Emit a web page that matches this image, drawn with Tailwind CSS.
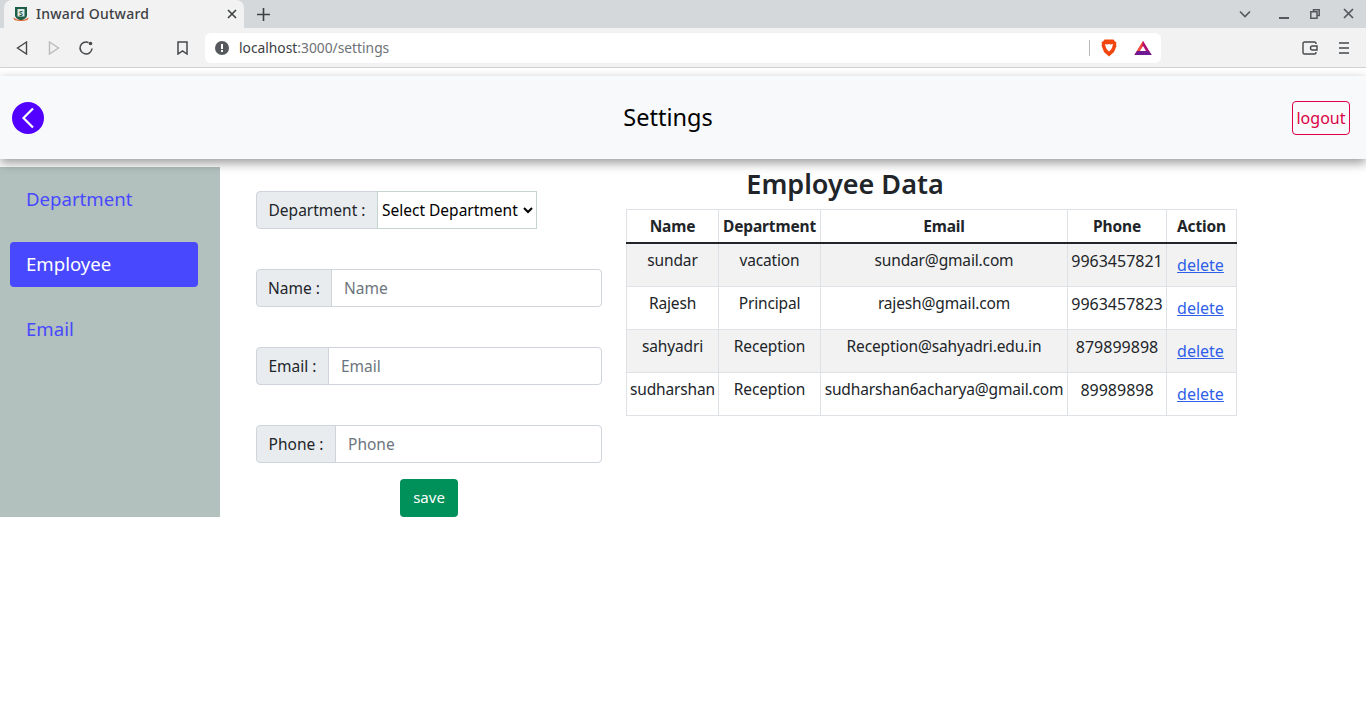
<!DOCTYPE html>
<html lang="en">

<head>
    <meta charset="UTF-8">
    <meta name="viewport" content="width=device-width, initial-scale=1.0">
    <title>Inward Outward</title>
    <script src="https://cdn.jsdelivr.net/npm/@tailwindcss/browser@4"></script>
</head>

<body class="bg-white text-[#212529] font-['Noto_Sans',sans-serif] overflow-hidden h-[722px]">
    <!-- browser tabs -->
    <div class="h-[28px] bg-[#d5d8db] flex items-end relative">
        <div class="ml-[4px] w-[240px] h-[28px] bg-[#f2f2f2] rounded-t-lg flex items-center pl-[9px] pr-[6px]">
            <svg width="16" height="16" viewBox="0 0 16 16">
                <path d="M2 1h12v8c0 3-3 4.500-6 5.500C5 13.500 2 12 2 9z" fill="#1d5c46" />
                <rect x="4.500" y="3" width="7" height="7.500" fill="#dfe9e4" />
                <path d="M0 11.500q8 5 16 0l-1.500 2.500q-6.500 2-13 0z" fill="#e0602c" />
                <text x="8" y="9.500" text-anchor="middle" font-size="7" font-weight="700" fill="#1d5c46">S</text>
            </svg>
            <span class="ml-[7px] mb-[2px] text-[14px] font-medium text-[#3c4043] tracking-[0.25px]">Inward Outward</span>
            <svg class="ml-auto mb-[1px]" width="12" height="12" viewBox="0 0 12 12" stroke="#3c4043" stroke-width="1.600">
                <path d="M2 2l8 8M10 2l-8 8" />
            </svg>
        </div>
        <svg class="ml-[13px] mb-[7px]" width="13" height="13" viewBox="0 0 13 13" stroke="#3c4043" stroke-width="1.600">
            <path d="M6.500 0v13M0 6.500h13" />
        </svg>
        <div class="ml-auto flex items-center h-[28px] pr-[12px] pb-[1px]">
            <svg width="12" height="8" viewBox="0 0 12 8" fill="none" stroke="#55585c" stroke-width="1.600">
                <path d="M1 1.500l5 5 5-5" />
            </svg>
            <svg class="ml-[28px] mt-[8px]" width="10" height="2" viewBox="0 0 10 2">
                <rect width="10" height="2" fill="#55585c" />
            </svg>
            <svg class="ml-[21px]" width="10" height="10" viewBox="0 0 10 10" fill="none" stroke="#55585c" stroke-width="1.500">
                <path d="M3.500 2.500V.8h5.700v5.700H7.500M.8 2.800h6.200v6.400H.8z" />
            </svg>
            <svg class="ml-[23px]" width="11" height="11" viewBox="0 0 11 11" stroke="#55585c" stroke-width="1.700">
                <path d="M1 1l9 9M10 1l-9 9" />
            </svg>
        </div>
    </div>

    <!-- browser toolbar -->
    <div class="h-[40px] bg-[#f2f2f2] border-b border-[#d0d1d2] flex items-center">
        <svg class="ml-[16px]" width="12" height="14" viewBox="0 0 12 14" fill="none" stroke="#46494c" stroke-width="1.400">
            <path d="M10.500 1L1.500 7l9 6z" />
        </svg>
        <svg class="ml-[20px]" width="12" height="14" viewBox="0 0 12 14" fill="none" stroke="#b9bbbd" stroke-width="1.400">
            <path d="M1.500 1l9 6-9 6z" />
        </svg>
        <svg class="ml-[18px]" width="16" height="16" viewBox="0 0 16 16" fill="none" stroke="#46494c" stroke-width="1.500">
            <path d="M14 8.500A6 6 0 1 1 10.500 2.500" />
            <circle cx="12.500" cy="3.500" r="1.800" fill="#46494c" stroke="none" />
        </svg>
        <svg class="ml-[83px]" width="11" height="14" viewBox="0 0 11 14" fill="none" stroke="#46494c" stroke-width="1.500">
            <path d="M1 1h9v12L5.500 10 1 13z" />
        </svg>
        <div class="ml-[17px] w-[956px] h-[30px] bg-white rounded-md flex items-center pl-[10px]">
            <svg width="14" height="14" viewBox="0 0 14 14">
                <circle cx="7" cy="7" r="7" fill="#55585c" />
                <rect x="6" y="3" width="2" height="5" fill="#fff" />
                <rect x="6" y="9" width="2" height="2" fill="#fff" />
            </svg>
            <span class="ml-[10px] pt-[2px] text-[13.8px]"><span class="text-[#3c4043]">localhost</span><span class="text-[#6e7276]">:3000/settings</span></span>
            <div class="ml-auto w-px h-[16px] bg-[#b4b6b8]"></div>
            <svg class="ml-[11px]" width="16" height="18" viewBox="0 0 16 18">
                <path d="M3.500.5h9l1.500 2 1.500 1-.5 2 .5 1.500L13 13l-5 4.500L3 13 .5 6.500 1 5 .5 3 2 2.500z" fill="#f1460f" />
                <path d="M4 5l2.500.5L8 5l1.500.5L12 5l-1 4-1.500 2L8 12.500 6.500 11 5 9z" fill="#fff" />
            </svg>
            <svg class="ml-[17px]" width="18" height="16" viewBox="0 0 18 16">
                <path d="M9 1l8.500 14H.5z" fill="#e0144c" />
                <path d="M9 1L.5 15H6z" fill="#f2503a" />
                <path d="M9 1l8.500 14H14L9 6z" fill="#a8127a" />
                <path d="M.5 15L3 11h12l2.500 4z" fill="#6f1a94" />
                <path d="M9 6l3 5H6z" fill="#fff" />
            </svg>
            <div class="w-[9px]"></div>
        </div>
        <svg class="ml-[141px]" width="16" height="14" viewBox="0 0 16 14" fill="none" stroke="#46494c" stroke-width="1.400">
            <path d="M14 3V2.500C14 1.500 13.500 1 12.500 1h-10C1.500 1 1 1.500 1 2.500v9c0 1 .5 1.500 1.500 1.500h10c1 0 1.500-.5 1.500-1.500V11" />
            <path d="M15 5H10.500a2 2 0 0 0 0 4H15z" />
        </svg>
        <svg class="ml-[21px]" width="10" height="12" viewBox="0 0 10 12" stroke="#46494c" stroke-width="1.500">
            <path d="M0 1h10M0 6h10M0 11h10" />
        </svg>
    </div>

    <!-- page header -->
    <nav class="relative z-10 mt-[8px] h-[83px] bg-[#f8f9fa] shadow-[0_4px_10px_rgba(0,0,0,0.4)] flex items-center justify-between pl-[12px] pr-[16px]">
        <div class="w-[32px] h-[32px] rounded-full bg-[#5200ff] flex items-center justify-center">
            <svg width="14" height="22" viewBox="0 0 14 22" fill="none" stroke="#fff" stroke-width="2.200">
                <path d="M12 1.500L2.500 11l9.500 9.500" />
            </svg>
        </div>
        <p class="text-[23.5px] text-black">Settings</p>
        <button class="w-[58px] h-[34px] rounded border border-[#dc0045] text-[#dc0045] text-[16px] bg-transparent">logout</button>
    </nav>

    <main class="flex items-start pt-[8px]">
        <!-- left menu -->
        <aside class="w-[220px] h-[350px] bg-[#b2c0be] pt-[10px] pl-[10px] pr-[22px] flex flex-col gap-[20px]">
            <a href="#" class="h-[45px] pl-[16px] pb-[2px] flex items-center rounded text-[18.6px] text-[#4848ff]">Department</a>
            <a href="#" class="h-[45px] pl-[16px] pb-[2px] flex items-center rounded text-[18.6px] text-white bg-[#4848ff]">Employee</a>
            <a href="#" class="h-[45px] pl-[16px] pb-[2px] flex items-center rounded text-[18.6px] text-[#4848ff]">Email</a>
        </aside>

        <!-- form -->
        <form class="ml-[36px] w-[346px] pt-[24px] flex flex-col gap-[40px] text-[15.5px]">
            <div class="flex h-[38px]">
                <span class="w-[122px] pt-[2px] flex items-center justify-center bg-[#e9ecef] border border-[#ced4da] rounded-l">Department :</span>
                <select class="w-[160px] -ml-px border border-[#c5d4d1] bg-white text-black">
                    <option>Select Department</option>
                </select>
            </div>
            <div class="flex h-[38px]">
                <span class="w-[76px] pt-[2px] flex items-center justify-center bg-[#e9ecef] border border-[#ced4da] rounded-l">Name :</span>
                <input type="text" placeholder="Name" class="flex-1 min-w-0 -ml-px px-3 pt-[2px] border border-[#ced4da] rounded-r placeholder:text-[#6c757d]">
            </div>
            <div class="flex h-[38px]">
                <span class="w-[73px] pt-[2px] flex items-center justify-center bg-[#e9ecef] border border-[#ced4da] rounded-l">Email :</span>
                <input type="text" placeholder="Email" class="flex-1 min-w-0 -ml-px px-3 pt-[2px] border border-[#ced4da] rounded-r placeholder:text-[#6c757d]">
            </div>
            <div class="flex flex-col">
                <div class="flex h-[38px]">
                    <span class="w-[80px] pt-[2px] flex items-center justify-center bg-[#e9ecef] border border-[#ced4da] rounded-l">Phone :</span>
                    <input type="text" placeholder="Phone" class="flex-1 min-w-0 -ml-px px-3 pt-[2px] border border-[#ced4da] rounded-r placeholder:text-[#6c757d]">
                </div>
                <button type="button" class="mt-[16px] self-center w-[58px] h-[38px] pb-[2px] rounded bg-[#00915a] text-white text-[15px]">save</button>
            </div>
        </form>

        <!-- employee table -->
        <section class="ml-[24px]">
            <h2 class="w-[438px] h-[34px] mb-[8px] flex items-center justify-center text-[27px] font-semibold">Employee Data</h2>
            <table class="table-fixed border-collapse w-[610px] text-center text-[15.5px] tracking-[-0.15px]">
                <thead>
                    <tr class="h-[33px] font-bold">
                        <th class="w-[92px] pt-[2px] border border-[#dee2e6] border-b-[#212529] border-b-2">Name</th>
                        <th class="w-[102px] pt-[2px] border border-[#dee2e6] border-b-[#212529] border-b-2">Department</th>
                        <th class="w-[247px] pt-[2px] border border-[#dee2e6] border-b-[#212529] border-b-2">Email</th>
                        <th class="w-[99px] pt-[2px] border border-[#dee2e6] border-b-[#212529] border-b-2">Phone</th>
                        <th class="w-[70px] pt-[2px] border border-[#dee2e6] border-b-[#212529] border-b-2">Action</th>
                    </tr>
                </thead>
                <tbody>
                    <tr class="h-[44px] bg-[#f2f2f2]">
                        <td class="border border-[#dee2e6] align-top pt-[5px]">sundar</td>
                        <td class="border border-[#dee2e6] align-top pt-[5px]">vacation</td>
                        <td class="border border-[#dee2e6] align-top pt-[5px]">sundar@gmail.com</td>
                        <td class="border border-[#dee2e6] align-top pt-[5px] text-[16px] tracking-normal">9963457821</td>
                        <td class="border border-[#dee2e6] pr-[2px] text-[16px] tracking-normal"><a href="#" class="text-[#2f5fe8] underline">delete</a></td>
                    </tr>
                    <tr class="h-[43px]">
                        <td class="border border-[#dee2e6] align-top pt-[5px]">Rajesh</td>
                        <td class="border border-[#dee2e6] align-top pt-[5px]">Principal</td>
                        <td class="border border-[#dee2e6] align-top pt-[5px]">rajesh@gmail.com</td>
                        <td class="border border-[#dee2e6] align-top pt-[5px] text-[16px] tracking-normal">9963457823</td>
                        <td class="border border-[#dee2e6] pr-[2px] text-[16px] tracking-normal"><a href="#" class="text-[#2f5fe8] underline">delete</a></td>
                    </tr>
                    <tr class="h-[43px] bg-[#f2f2f2]">
                        <td class="border border-[#dee2e6] align-top pt-[5px]">sahyadri</td>
                        <td class="border border-[#dee2e6] align-top pt-[5px]">Reception</td>
                        <td class="border border-[#dee2e6] align-top pt-[5px]">Reception@sahyadri.edu.in</td>
                        <td class="border border-[#dee2e6] align-top pt-[5px] text-[16px] tracking-normal">879899898</td>
                        <td class="border border-[#dee2e6] pr-[2px] text-[16px] tracking-normal"><a href="#" class="text-[#2f5fe8] underline">delete</a></td>
                    </tr>
                    <tr class="h-[43px]">
                        <td class="border border-[#dee2e6] align-top pt-[5px]">sudharshan</td>
                        <td class="border border-[#dee2e6] align-top pt-[5px]">Reception</td>
                        <td class="border border-[#dee2e6] align-top pt-[5px]">sudharshan6acharya@gmail.com</td>
                        <td class="border border-[#dee2e6] align-top pt-[5px] text-[16px] tracking-normal">89989898</td>
                        <td class="border border-[#dee2e6] pr-[2px] text-[16px] tracking-normal"><a href="#" class="text-[#2f5fe8] underline">delete</a></td>
                    </tr>
                </tbody>
            </table>
        </section>
    </main>
</body>

</html>
